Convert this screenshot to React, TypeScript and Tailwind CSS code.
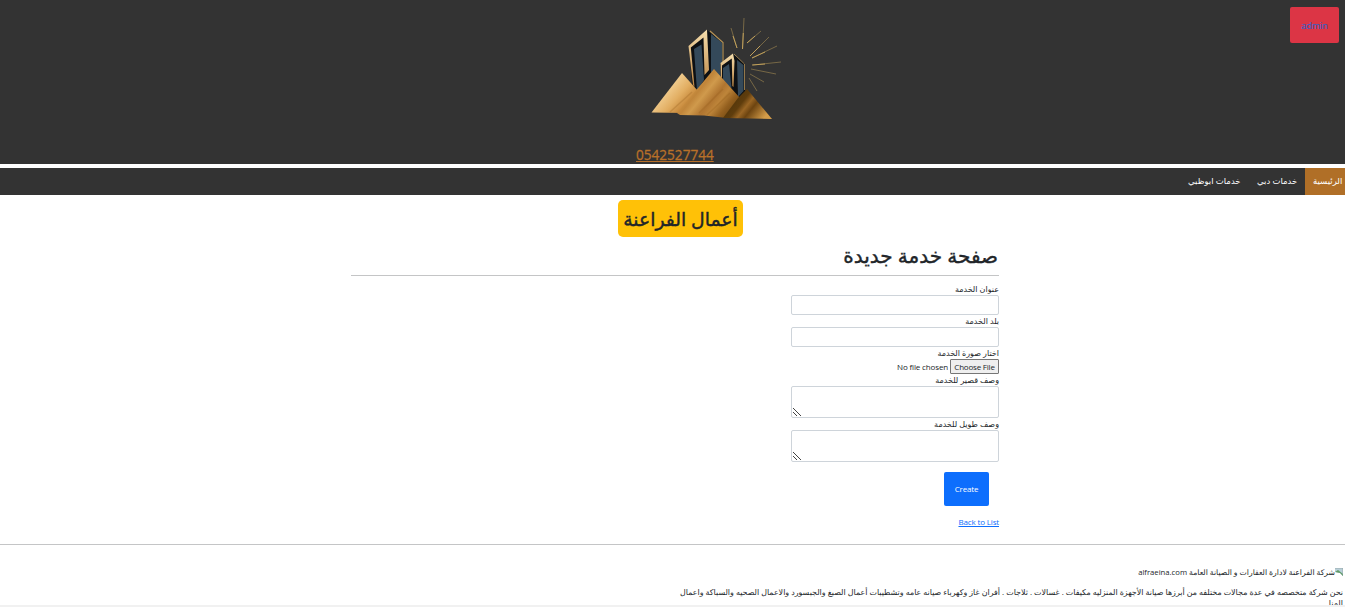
import React from "react";

function Logo() {
  return (
    <svg className="block h-[108px] w-[132px]" viewBox="650 15 132 108">
      <defs>
        <linearGradient id="sand" gradientUnits="userSpaceOnUse" x1="665" y1="88" x2="694" y2="114">
          <stop offset="0" stopColor="#f3d196" />
          <stop offset="0.4" stopColor="#e2ae62" />
          <stop offset="0.7" stopColor="#c58638" />
          <stop offset="1" stopColor="#a96a22" />
        </linearGradient>
        <linearGradient id="mid" gradientUnits="userSpaceOnUse" x1="692" y1="82" x2="734" y2="116">
          <stop offset="0" stopColor="#d39a48" />
          <stop offset="0.2" stopColor="#c0853a" />
          <stop offset="0.32" stopColor="#d09a4c" />
          <stop offset="0.5" stopColor="#b07530" />
          <stop offset="0.62" stopColor="#be853a" />
          <stop offset="0.78" stopColor="#94601f" />
          <stop offset="1" stopColor="#6b430e" />
        </linearGradient>
        <linearGradient id="dark" gradientUnits="userSpaceOnUse" x1="734" y1="94" x2="764" y2="118">
          <stop offset="0" stopColor="#4f3409" />
          <stop offset="0.3" stopColor="#5f3d0d" />
          <stop offset="0.45" stopColor="#9a6624" />
          <stop offset="0.6" stopColor="#6d4410" />
          <stop offset="1" stopColor="#d49c49" />
        </linearGradient>
        <linearGradient id="edge" x1="0" y1="0" x2="0" y2="1">
          <stop offset="0" stopColor="#f6dfae" />
          <stop offset="1" stopColor="#b98240" />
        </linearGradient>
      </defs>
      <path d="M689 46L707 30L723 43V86L696 98L692 84Z" fill="#0d1013" />
      <path d="M694 49L701.5 44.5L704 80L697 91ZM711 34L722.5 43V80L711 72Z" fill="#34495a" />
      <path d="M688.5 46L707 29.5L709 70L704.5 75L703.5 37.5L690.8 47.5L694.5 87L693 85Z" fill="url(#edge)" />
      <path d="M710 31L723 42.5V64" fill="none" stroke="#b99455" strokeWidth="1.1" />
      <path d="M720 64L733 54L745 64V92L739 102L721 84Z" fill="#0d1013" />
      <path d="M723 68L729 64L731.5 88L723 82ZM737 60L743.5 65V91L738 97Z" fill="#34495a" />
      <path d="M720.5 63L733 53.5L734.5 61L733.5 87L732.3 86L731.8 58.5L722 65.5V79L720.8 76Z" fill="url(#edge)" />
      <path d="M734 54L744.5 64V90" fill="none" stroke="#a38350" strokeWidth="0.9" />
      <path d="M651.5 112.5L682 73L698 91L684 113Z" fill="url(#sand)" />
      <path d="M677 113L714 69L740 98L727 118L704 115.5L680 115Z" fill="url(#mid)" />
      <path d="M723 118L738 98L747 89L772 119Z" fill="url(#dark)" />
      <path d="M670 112L692 92M699 113L723 89M707 115L730 93" stroke="#8f5817" strokeWidth="1.5" opacity="0.25" />
      <path d="M731 28L737 48M744 18L742.5 49M761 31L747 43M769 37L750 56M777 46L752 58M781 62L753 65M776 74L751 69M764 82L750 74M757 91L749 78" stroke="#ad9155" strokeWidth="0.7" fill="none" opacity="0.8" />
      <path d="M733 36L737 48M743.3 33L742.5 49M755 36L747 43M760 46L750 56M765 52L752 58M765 64L752 65" stroke="#c9a75d" strokeWidth="0.9" />
    </svg>
  );
}

function Grip() {
  return (
    <svg className="h-2 w-2" viewBox="0 0 8 8">
      <path d="M0 0L8 8M0 4L4 8" stroke="#444" strokeWidth="1" />
    </svg>
  );
}

function BrokenImage() {
  return (
    <svg className="h-2 w-2" viewBox="0 0 8 8">
      <path d="M0 0H8V8L5 5L0 4Z" fill="#b9cfd8" />
      <path d="M0 4L3 2L8 6V8L5 5Z" fill="#5f9c68" />
      <path d="M0 0H8V8" fill="none" stroke="#8d9b9f" strokeWidth="0.7" />
    </svg>
  );
}

const label = "flex h-3 items-center whitespace-nowrap text-[8px] leading-3";

export default function App() {
  return (
    <div dir="rtl" className="flex h-[607px] w-full flex-col overflow-hidden bg-white font-['Open_Sans','DejaVu_Sans',sans-serif] text-[8px] text-[#212529]">
      <header className="flex h-[164px] shrink-0 bg-[#333] pr-1.5 pt-[7px]">
        <button className="flex h-9 w-[49px] items-center justify-center rounded-[2px] bg-[#dc3545] pt-0.5 text-[9px] font-medium text-[#3b5fc0] [-webkit-text-stroke:0.2px_#3b5fc0]">admin</button>
        <div className="mr-[508px] mt-2 flex w-[146px] flex-col">
          <Logo />
          <a dir="ltr" className="mr-[67px] mt-[23px] whitespace-nowrap text-[13.6px] font-medium leading-[18px] text-[#b87029] underline [-webkit-text-stroke:0.3px_#b87029]">0542527744</a>
        </div>
      </header>
      <nav className="mt-1 flex h-[27px] shrink-0 bg-[#333] text-[8.5px] text-white">
        <a className="flex w-10 items-center justify-end whitespace-nowrap bg-[#b06f27] pb-px pl-2">الرئيسية</a>
        <a className="flex w-14 items-center justify-end whitespace-nowrap pb-px pl-2">خدمات دبي</a>
        <a className="flex w-[69px] items-center justify-end whitespace-nowrap pb-px pl-2">خدمات ابوظبي</a>
      </nav>
      <div className="mr-[602px] mt-[5px] flex h-[37px] w-[125px] shrink-0 items-center justify-center whitespace-nowrap rounded-[5px] bg-[#ffc107] pt-0.5 text-[18.8px] [-webkit-text-stroke:0.4px_#212529]">أعمال الفراعنة</div>
      <main className="mr-[346px] flex w-[648px] shrink-0 flex-col items-start">
        <h1 className="flex h-[39px] w-full items-center whitespace-nowrap border-b border-[#c4c5c6] pr-px text-[20px] [-webkit-text-stroke:0.4px_#212529]">صفحة خدمة جديدة</h1>
        <label className={label + " mt-[7px]"}>عنوان الخدمة</label>
        <input className="h-5 w-[208px] rounded-[2px] border border-[#ced4da]" />
        <label className={label}>بلد الخدمة</label>
        <input className="h-5 w-[208px] rounded-[2px] border border-[#ced4da]" />
        <label className={label}>اختار صورة الخدمة</label>
        <div className="flex h-[15px] items-center gap-[2px]">
          <button className="flex h-[15px] w-[49px] items-center justify-center whitespace-nowrap rounded-[1px] border border-[#767676] bg-[#efefef] tracking-[-0.2px]">Choose File</button>
          <span className="tracking-[-0.15px]">No file chosen</span>
        </div>
        <label className={label}>وصف قصير للخدمة</label>
        <div className="flex h-8 w-[208px] items-end justify-end rounded-[2px] border border-[#ced4da] p-px"><Grip /></div>
        <label className={label}>وصف طويل للخدمة</label>
        <div className="flex h-8 w-[208px] items-end justify-end rounded-[2px] border border-[#ced4da] p-px"><Grip /></div>
        <button className="mr-2.5 mt-2.5 flex h-[34px] w-[45px] items-center justify-center rounded-[2px] bg-[#0d6efd] tracking-[-0.15px] text-white">Create</button>
        <a className="mt-2.5 leading-3 tracking-[-0.15px] text-[#0d6efd] underline">Back to List</a>
      </main>
      <footer className="mt-4 flex h-[61px] shrink-0 flex-col items-start overflow-hidden border-t border-[#c4c5c6] pr-0.5 pt-[21px]">
        <div className="flex h-3 items-center whitespace-nowrap text-[7.7px]">
          <BrokenImage />
          <span className="pt-px">شركة الفراعنة لادارة العقارات و الصيانة العامة alfraeina.com</span>
        </div>
        <p className="mt-2 whitespace-nowrap text-[7.91px] leading-3">نحن شركة متخصصه في عدة مجالات مختلفه من أبرزها صيانة الأجهزة المنزليه مكيفات . غسالات . ثلاجات . أفران غاز وكهرباء صيانه عامه وتشطيبات أعمال الصبغ والجبسورد والاعمال الصحيه والسباكة واعمال</p>
        <p className="-mt-px whitespace-nowrap leading-3">المنا</p>
      </footer>
      <div className="h-[2px] shrink-0 bg-[#f1f1f1]" />
    </div>
  );
}
